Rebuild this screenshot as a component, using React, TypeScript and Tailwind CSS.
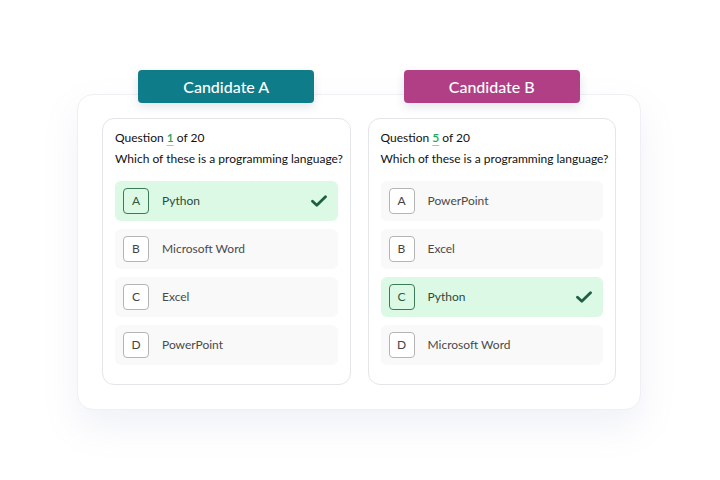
const candidates = [
  {
    name: 'Candidate A',
    tag: 'bg-[#0f7c8a]',
    current: 1,
    options: [
      { letter: 'A', text: 'Python', correct: true },
      { letter: 'B', text: 'Microsoft Word' },
      { letter: 'C', text: 'Excel' },
      { letter: 'D', text: 'PowerPoint' },
    ],
  },
  {
    name: 'Candidate B',
    tag: 'bg-[#b03f86]',
    current: 5,
    options: [
      { letter: 'A', text: 'PowerPoint' },
      { letter: 'B', text: 'Excel' },
      { letter: 'C', text: 'Python', correct: true },
      { letter: 'D', text: 'Microsoft Word' },
    ],
  },
];

function CheckMark() {
  return (
    <svg width="16" height="12" viewBox="0 0 16 12" fill="none">
      <path d="M1.5 6.2 L5.8 10.2 L14.5 1.8" stroke="#1f5f42" strokeWidth="2.8" strokeLinecap="round" strokeLinejoin="round" />
    </svg>
  );
}

export default function App() {
  return (
    <div className="w-[720px] h-[480px] bg-white overflow-hidden" style={{ fontFamily: 'Lato, "Noto Sans", sans-serif' }}>
      <div className="pt-[70px] pl-[77px] w-[641px]">
        {/* Candidate tags */}
        <div className="relative z-10 grid grid-cols-2 gap-[17px] px-[25px]">
          {candidates.map((c) => (
            <div key={c.name} className="flex justify-center">
              <div className={`w-[176px] h-[33px] rounded-[4px] ${c.tag} text-white text-[16px] font-medium flex items-center justify-center shadow-[0_4px_10px_rgba(30,40,80,0.12)]`}>
                {c.name}
              </div>
            </div>
          ))}
        </div>

        {/* Outer card */}
        <div className="-mt-[9px] h-[316px] rounded-[16px] bg-white border border-[#eef0f4] shadow-[0_16px_36px_rgba(120,140,190,0.12)] grid grid-cols-2 gap-[17px] pt-[23px] px-[24px]">
          {candidates.map((c) => (
            <div key={c.name} className="h-[267px] rounded-[12px] border border-[#e3e5e9] bg-white px-3 pt-[8px]">
              <p className="text-[12px] leading-[21px] text-[#111] whitespace-nowrap">
                Question{' '}
                <span className="text-[#22a55a] font-semibold underline decoration-[#86d8a5] underline-offset-[3px]">{c.current}</span>{' '}
                of 20
              </p>
              <p className="text-[12px] leading-[21px] text-[#111] whitespace-nowrap">Which of these is a programming language?</p>
              <div className="mt-[12px] flex flex-col gap-[8px]">
                {c.options.map((o) => (
                  <div
                    key={o.letter}
                    className={`h-[40px] rounded-[6px] flex items-center pl-[8px] pr-[11px] ${o.correct ? 'bg-[#dcf9e6]' : 'bg-[#f9f9f9]'}`}
                  >
                    <div
                      className={`w-[26px] h-[26px] rounded-[4px] border flex items-center justify-center text-[12px] ${
                        o.correct ? 'border-[#3d7a5a] text-[#2c5a44] bg-[#dcf9e6]' : 'border-[#b5b5b5] text-[#444] bg-white'
                      }`}
                    >
                      {o.letter}
                    </div>
                    <span className={`ml-[13px] text-[12px] flex-1 ${o.correct ? 'text-[#2c4a3c]' : 'text-[#4a4a4a]'}`}>{o.text}</span>
                    {o.correct && <CheckMark />}
                  </div>
                ))}
              </div>
            </div>
          ))}
        </div>
      </div>
    </div>
  );
}
